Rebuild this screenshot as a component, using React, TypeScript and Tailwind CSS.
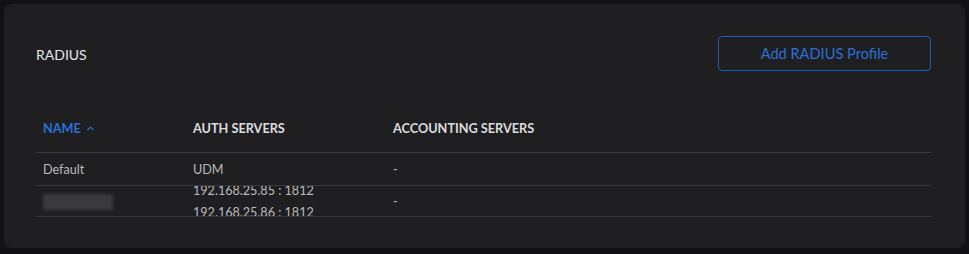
import { ChevronUp } from 'lucide-react';

const rows = [
  { id: 'default', name: 'Default', auth: ['UDM'], acct: '-' },
  { id: 'hidden', name: null, auth: ['192.168.25.85 : 1812', '192.168.25.86 : 1812'], acct: '-' },
];

export default function App() {
  return (
    <div className="w-[969px] h-[254px] bg-[#121214] p-[4px] font-['Lato','Liberation_Sans',sans-serif]">
      <div className="h-[244px] w-[961px] rounded-lg bg-[#1f1f21] pl-[32px] pr-[34px] pt-[32px]">
        <div className="flex items-center justify-between h-[35px]">
          <h2 className="text-[14px] text-[#e6e6e8] pt-[1px]">RADIUS</h2>
          <button className="w-[213px] h-[35px] rounded-[4px] border border-[#1d5fae] text-[14.6px] text-[#2a6fd6]">
            Add RADIUS Profile
          </button>
        </div>

        <div className="mt-[34px]">
          <div className="flex items-center h-[48px] border-b border-[#3a3a3d] text-[12.7px] font-bold text-[#dcdcde]">
            <div className="w-[157px] pl-[7px] flex items-center gap-[4px] text-[#2a6fd6]">
              NAME
              <ChevronUp size={11} strokeWidth={3} />
            </div>
            <div className="w-[200px]">AUTH SERVERS</div>
            <div>ACCOUNTING SERVERS</div>
          </div>

          {rows.map((row, i) => (
            <div
              key={row.id}
              className={`flex items-center border-b border-[#38383b] text-[12.6px] text-[#b9b9bc] overflow-hidden pt-[2px] ${
                i === 0 ? 'h-[33px]' : 'h-[31px]'
              }`}
            >
              <div className="w-[157px] pl-[7px]">
                {row.name ? (
                  row.name
                ) : (
                  <div className="w-[70px] h-[16px] bg-[#3a3a3c] blur-[1.5px]" />
                )}
              </div>
              <div className="w-[200px] leading-[22px] flex flex-col">
                {row.auth.map((a) => (
                  <span key={a}>{a}</span>
                ))}
              </div>
              <div>{row.acct}</div>
            </div>
          ))}
        </div>
      </div>
    </div>
  );
}
